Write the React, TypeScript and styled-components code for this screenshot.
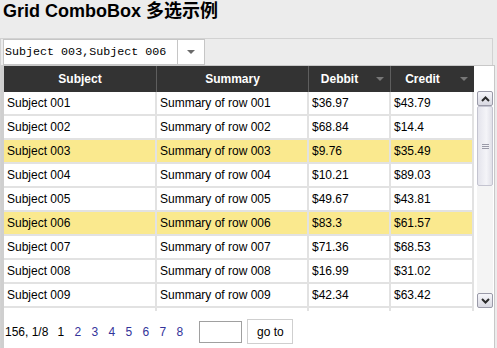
import styled, { createGlobalStyle } from "styled-components";

const GlobalStyle = createGlobalStyle`
  body {
    margin: 0;
    background: #ececec;
    font-family: "Liberation Sans", Arial, sans-serif;
  }
`;

type RowData = {
  id: string;
  debbit: string;
  credit: string;
  selected?: boolean;
};

const rows: RowData[] = [
  { id: "001", debbit: "$36.97", credit: "$43.79" },
  { id: "002", debbit: "$68.84", credit: "$14.4" },
  { id: "003", debbit: "$9.76", credit: "$35.49", selected: true },
  { id: "004", debbit: "$10.21", credit: "$89.03" },
  { id: "005", debbit: "$49.67", credit: "$43.81" },
  { id: "006", debbit: "$83.3", credit: "$61.57", selected: true },
  { id: "007", debbit: "$71.36", credit: "$68.53" },
  { id: "008", debbit: "$16.99", credit: "$31.02" },
  { id: "009", debbit: "$42.34", credit: "$63.42" },
];

const COLUMNS = "153px 152px 82px 83px";

const Page = styled.div`
  width: 497px;
  height: 348px;
  overflow: hidden;
`;

const Title = styled.h1`
  margin: 0;
  padding-left: 3px;
  font-family: "Liberation Sans", "Noto Sans CJK SC", sans-serif;
  font-size: 18px;
  line-height: 22px;
  font-weight: bold;
  color: #000;
`;

const Frame = styled.div`
  position: relative;
  margin-top: 16px;
  width: 491px;
  height: 320px;
  border: 1px solid #d2d2d2;
  border-bottom: none;
`;

const Combo = styled.div`
  display: flex;
  box-sizing: border-box;
  width: 202px;
  height: 26px;
  margin-left: 2px;
  border: 1px solid #c6c6c6;
  background: #fff;
`;

const ComboInput = styled.div`
  width: 172px;
  padding-left: 1px;
  border-right: 1px solid #c6c6c6;
  font-family: "Liberation Mono", "Courier New", monospace;
  font-size: 11.7px;
  line-height: 24px;
  color: #000;
  white-space: nowrap;
  overflow: hidden;
`;

const ComboButton = styled.div`
  flex: 1;
  display: flex;
  align-items: center;
  justify-content: center;
`;

const DownTriangle = styled.span<{ color: string }>`
  width: 0;
  height: 0;
  border-left: 4px solid transparent;
  border-right: 4px solid transparent;
  border-top: 4px solid ${(p) => p.color};
`;

const Panel = styled.div`
  position: absolute;
  top: 26px;
  left: 0;
  box-sizing: border-box;
  width: 494px;
  height: 283px;
  border-top: 1px solid #c8c8c8;
  border-left: 3px solid #cfcfcf;
  border-right: 1px solid #c8c8c8;
  background: #fff;
`;

const GridArea = styled.div`
  display: flex;
  height: 245px;
`;

const Table = styled.div`
  width: 470px;
`;

const HeaderRow = styled.div`
  display: grid;
  grid-template-columns: ${COLUMNS};
  height: 26px;
  background: #333;
`;

const HeaderCell = styled.div<{ last?: boolean }>`
  display: flex;
  align-items: center;
  border-right: ${(p) => (p.last ? "none" : "1px solid #5e5e5e")};
  color: #fff;
  font-size: 12px;
  font-weight: bold;
`;

const HeaderLabel = styled.span`
  flex: 1;
  text-align: center;
`;

const SortSlot = styled.span`
  width: 20px;
  display: flex;
  justify-content: center;
`;

const Body = styled.div`
  height: 219px;
  overflow: hidden;
`;

const Row = styled.div<{ selected?: boolean }>`
  display: grid;
  grid-template-columns: ${COLUMNS};
  height: 24px;
  background: ${(p) => (p.selected ? "#fae98e" : "#fff")};
`;

const Cell = styled.div`
  box-sizing: border-box;
  padding-left: 3px;
  border-right: 2px solid #e2e2e2;
  border-bottom: 2px solid #e2e2e2;
  font-size: 12px;
  line-height: 22px;
  color: #000;
  white-space: nowrap;
  overflow: hidden;
`;

const ScrollColumn = styled.div`
  flex: 1;
  display: flex;
  flex-direction: column;
  padding: 25px 0 3px 3px;
`;

const ScrollButton = styled.div`
  box-sizing: border-box;
  width: 16px;
  height: 15px;
  display: flex;
  align-items: center;
  justify-content: center;
  border: 1px solid #9a9aa8;
  border-radius: 2px;
  background: linear-gradient(#f6f6fa, #d9d9e2);
`;

const Thumb = styled.div`
  box-sizing: border-box;
  width: 16px;
  height: 80px;
  display: flex;
  align-items: center;
  justify-content: center;
  border: 1px solid #c4c4d0;
  border-radius: 2px;
  background: linear-gradient(90deg, #e4e4ec, #f4f4f8 60%, #e0e0e8);
`;

const Track = styled.div`
  flex: 1;
  width: 16px;
  background: #f4f4f4;
`;

const Pager = styled.div`
  display: flex;
  align-items: center;
  height: 37px;
  padding: 4px 0 0 1px;
  box-sizing: border-box;
  font-size: 12px;
  color: #000;
`;

const PageInfo = styled.span`
  margin-right: 4px;
`;

const PageLink = styled.span<{ current?: boolean }>`
  display: inline-block;
  width: 17px;
  text-align: center;
  color: ${(p) => (p.current ? "#000" : "#33339a")};
`;

const PageInput = styled.div`
  box-sizing: border-box;
  width: 43px;
  height: 22px;
  margin-left: 11px;
  border: 1px solid #a0a0a0;
  background: #fff;
`;

const GoButton = styled.div`
  box-sizing: border-box;
  width: 46px;
  height: 25px;
  margin-left: 5px;
  display: flex;
  align-items: center;
  justify-content: center;
  border: 1px solid #cfcfcf;
  background: #fff;
  font-size: 12px;
`;

const Chevron = ({ up }: { up?: boolean }) => (
  <svg width="9" height="6" viewBox="0 0 9 6">
    <polyline
      points={up ? "1,5 4.5,1.5 8,5" : "1,1 4.5,4.5 8,1"}
      fill="none"
      stroke="#2a2a2a"
      strokeWidth="2"
    />
  </svg>
);

const Grip = () => (
  <svg width="7" height="7" viewBox="0 0 7 7">
    <path d="M0 1.5h7M0 3.5h7M0 5.5h7" stroke="#9a9aa8" strokeWidth="1" />
  </svg>
);

export default function App() {
  return (
    <Page>
      <GlobalStyle />
      <Title>Grid ComboBox 多选示例</Title>
      <Frame>
        <Combo>
          <ComboInput>Subject 003,Subject 006</ComboInput>
          <ComboButton>
            <DownTriangle color="#6a6a6a" />
          </ComboButton>
        </Combo>
        <Panel>
          <GridArea>
            <Table>
              <HeaderRow>
                <HeaderCell>
                  <HeaderLabel>Subject</HeaderLabel>
                </HeaderCell>
                <HeaderCell>
                  <HeaderLabel>Summary</HeaderLabel>
                </HeaderCell>
                <HeaderCell>
                  <HeaderLabel>Debbit</HeaderLabel>
                  <SortSlot>
                    <DownTriangle color="#777" />
                  </SortSlot>
                </HeaderCell>
                <HeaderCell last>
                  <HeaderLabel>Credit</HeaderLabel>
                  <SortSlot>
                    <DownTriangle color="#777" />
                  </SortSlot>
                </HeaderCell>
              </HeaderRow>
              <Body>
                {rows.map((r) => (
                  <Row key={r.id} selected={r.selected}>
                    <Cell>Subject {r.id}</Cell>
                    <Cell>Summary of row {r.id}</Cell>
                    <Cell>{r.debbit}</Cell>
                    <Cell>{r.credit}</Cell>
                  </Row>
                ))}
                {/* top edge of the next row, scrolled out of view */}
                <Row>
                  <Cell />
                  <Cell />
                  <Cell />
                  <Cell />
                </Row>
              </Body>
            </Table>
            <ScrollColumn>
              <ScrollButton>
                <Chevron up />
              </ScrollButton>
              <Thumb>
                <Grip />
              </Thumb>
              <Track />
              <ScrollButton>
                <Chevron />
              </ScrollButton>
            </ScrollColumn>
          </GridArea>
          <Pager>
            <PageInfo>156, 1/8</PageInfo>
            {[1, 2, 3, 4, 5, 6, 7, 8].map((n) => (
              <PageLink key={n} current={n === 1}>
                {n}
              </PageLink>
            ))}
            <PageInput />
            <GoButton>go to</GoButton>
          </Pager>
        </Panel>
      </Frame>
    </Page>
  );
}
